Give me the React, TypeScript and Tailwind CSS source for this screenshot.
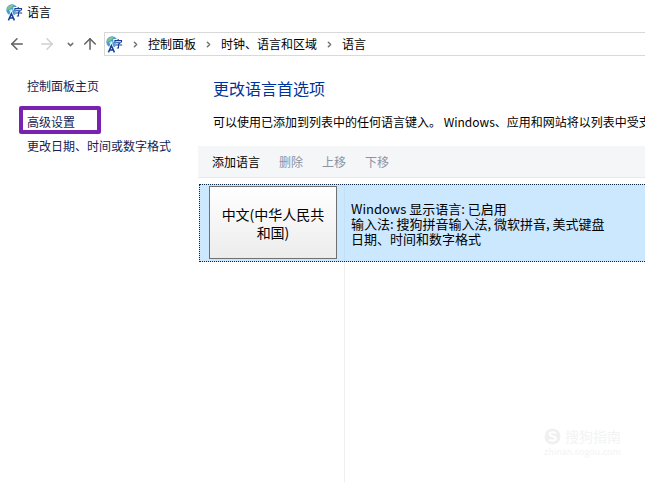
import { ArrowLeft, ArrowRight, ArrowUp, ChevronDown, ChevronRight } from 'lucide-react';
import clsx from 'clsx';

const CRUMBS = ['控制面板', '时钟、语言和区域', '语言'];

const ACTIONS = [
  { label: '添加语言', enabled: true },
  { label: '删除', enabled: false },
  { label: '上移', enabled: false },
  { label: '下移', enabled: false },
];

export default function App() {
  return (
    <div className="flex min-h-screen flex-col overflow-hidden bg-white font-['Noto_Sans_CJK_SC',sans-serif] text-xs text-black">
      <header className="flex h-6 items-center gap-1 pl-1.5">
        <LanguageIcon />
        <h1 className="leading-4">语言</h1>
      </header>
      <NavBar />
      <div className="flex flex-1">
        <SideBar />
        <main className="flex min-w-0 flex-1 flex-col">
          <div className="pt-3 pl-[15px] whitespace-nowrap">
            <h2 className="text-base leading-6 text-[#003399]">更改语言首选项</h2>
            <p className="mt-3.5 leading-4">
              可以使用已添加到列表中的任何语言键入。 Windows、应用和网站将以列表中受支持的语言显示。
            </p>
          </div>
          <div className="mt-4 flex h-8 shrink-0 items-center gap-[19px] border-b border-[#e6ebf2] bg-[#f5f6f8] pl-3.5">
            {ACTIONS.map((a) => (
              <button
                key={a.label}
                type="button"
                disabled={!a.enabled}
                className={clsx('leading-4', a.enabled ? 'text-black' : 'text-[#8b93a5]')}
              >
                {a.label}
              </button>
            ))}
          </div>
          <LanguageList />
        </main>
      </div>
      <Watermark />
    </div>
  );
}

function NavBar() {
  return (
    <nav className="flex h-10 items-center" aria-label="导航">
      <button type="button" aria-label="后退" className="ml-2 text-[#606060]">
        <ArrowLeft size={18} />
      </button>
      <button type="button" aria-label="前进" className="ml-3 text-[#d0d0d0]">
        <ArrowRight size={18} />
      </button>
      <button type="button" aria-label="最近的位置" className="ml-2.5 text-[#707070]">
        <ChevronDown size={9} strokeWidth={4} />
      </button>
      <button type="button" aria-label="上移一级" className="ml-1.5 text-[#606060]">
        <ArrowUp size={18} />
      </button>
      <div className="ml-[5px] flex h-6 flex-1 items-center border border-r-0 border-[#d9d9d9] pl-px">
        <LanguageIcon />
        {CRUMBS.map((crumb) => (
          <span key={crumb} className="flex items-center">
            <ChevronRight size={9} strokeWidth={4} className="mx-2 text-[#707070]" />
            <a href="#" className="leading-4">
              {crumb}
            </a>
          </span>
        ))}
      </div>
    </nav>
  );
}

function SideBar() {
  return (
    <aside className="flex w-[198px] shrink-0 flex-col items-start pt-3.5 pl-[19px] leading-4 text-[#151c55]">
      <a href="#" className="px-2">
        控制面板主页
      </a>
      {/* Highlighted entry */}
      <a href="#" className="mt-3 rounded-xs border-4 border-[#7a22b0] pt-1 pr-[22px] pl-1">
        高级设置
      </a>
      <a href="#" className="mt-1 px-2">
        更改日期、时间或数字格式
      </a>
    </aside>
  );
}

function LanguageList() {
  return (
    <div className="flex flex-1 flex-col pt-1.5 pl-px">
      <div className="flex h-[78px] border border-r-0 border-dotted border-[#0a2540] bg-[#cce8ff]">
        <div className="flex w-[145px] shrink-0 border-r border-[#c2e0f7] pt-px pb-0.5 pl-[9px]">
          <button
            type="button"
            className="w-32 border border-[#707070] bg-linear-to-b from-white to-[#ececec] px-2 text-sm leading-[18px]"
          >
            中文(中华人民共和国)
          </button>
        </div>
        <div className="self-center pl-1.5 text-[13px] leading-[15px] whitespace-nowrap">
          <p>Windows 显示语言: 已启用</p>
          <p>输入法: 搜狗拼音输入法, 微软拼音, 美式键盘</p>
          <p>日期、时间和数字格式</p>
        </div>
      </div>
      <div className="w-[146px] flex-1 border-r border-[#f0f0f0]" />
    </div>
  );
}

function Watermark() {
  return (
    <div className="absolute right-6 bottom-6 text-[#f3f3f3]" aria-hidden>
      <div className="flex items-center gap-1">
        <svg width="17" height="17" viewBox="0 0 17 17">
          <circle cx="8.5" cy="8.5" r="8" fill="#f0f0f0" />
          <path
            d="M12 5.2C10.5 4 5.6 3.6 5.6 6.2C5.6 8.8 11.8 7.6 11.8 10.6C11.8 13.4 6.6 13 5 11.6"
            fill="none"
            stroke="#fff"
            strokeWidth="2"
          />
        </svg>
        <span className="text-sm leading-5">搜狗指南</span>
      </div>
      <p className="text-[9px] leading-3">zhinan.sogou.com</p>
    </div>
  );
}

// Globe with a Latin letter and a Chinese character on top
function LanguageIcon() {
  return (
    <svg width="17" height="17" viewBox="0 0 17 17" className="shrink-0" aria-hidden>
      <circle cx="6" cy="6" r="5.7" fill="#4a9bd4" />
      <path d="M1.6 3C3.6 0.8 6.6 0.4 7.6 1.2L6 3.6L3.6 5L0.8 6Z" fill="#7cc68a" />
      <path d="M3 6L6 5L7 7L4.6 9Z" fill="#a9dcf4" />
      <g fill="none" stroke="#fff" strokeWidth="2.6">
        <path d="M2.4 16L5.4 9L8.4 16M3.6 13.6H7.4" />
        <path d="M8.6 6V4.4H15.2V6M10 7H14L12.4 8.4V12H10.8M8.6 9H16" />
      </g>
      <g fill="none" stroke="#153f96">
        <path d="M2.4 16.4L5.4 9.6L8.4 16.4M3.6 14H7.4" strokeWidth="1.5" />
        <path d="M12.2 3V4.6M8.9 6.2V4.6H15.5V6.2M10 6.8H14.2L12.5 8.2V12H10.8M8.4 9H16.2" strokeWidth="1.1" />
      </g>
    </svg>
  );
}
